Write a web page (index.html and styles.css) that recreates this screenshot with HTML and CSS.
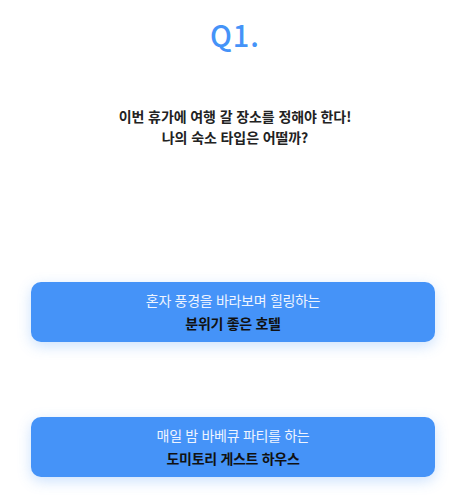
FILE: index.html
```html
<!DOCTYPE html>
<html lang="ko">
<head>
<meta charset="utf-8">
<title>숙소 타입 테스트</title>
<link rel="stylesheet" href="styles.css">
</head>
<body>
<div class="page">
	<div class="num">Q1.</div>
	<div class="question">이번 휴가에 여행 갈 장소를 정해야 한다!<br>나의 숙소 타입은 어떨까?</div>
	<div class="answers">
		<button class="answer" type="button">
			<span class="sub">혼자 풍경을 바라보며 힐링하는</span>
			<span class="main">분위기 좋은 호텔</span>
		</button>
		<button class="answer" type="button">
			<span class="sub">매일 밤 바베큐 파티를 하는</span>
			<span class="main">도미토리 게스트 하우스</span>
		</button>
	</div>
</div>
</body>
</html>
```

FILE: styles.css
```css
*{box-sizing:border-box;}
body{margin:0;background:#fff;color:#222;font-family:"Noto Sans CJK KR","Noto Sans",sans-serif;}
.page{width:470px;height:500px;overflow:hidden;}
.num{text-align:center;padding-top:14px;font-size:29px;font-weight:500;color:#4593f8;line-height:40px;letter-spacing:1px;}
.question{text-align:center;margin-top:52px;font-size:14px;font-weight:700;line-height:21px;color:#222;letter-spacing:-0.1px;}
.answers{display:flex;flex-direction:column;gap:75px;margin:134px 35px 0 31px;}
.answer{display:flex;flex-direction:column;align-items:center;justify-content:center;height:60px;border:none;border-radius:10px;background:#4593f8;box-shadow:0 4px 14px rgba(69,147,248,.28);font-family:inherit;font-size:14px;line-height:23px;letter-spacing:-0.3px;cursor:pointer;}
.answer .sub{color:#eef4ff;font-weight:400;}
.answer .main{color:#111;font-weight:700;}
```
